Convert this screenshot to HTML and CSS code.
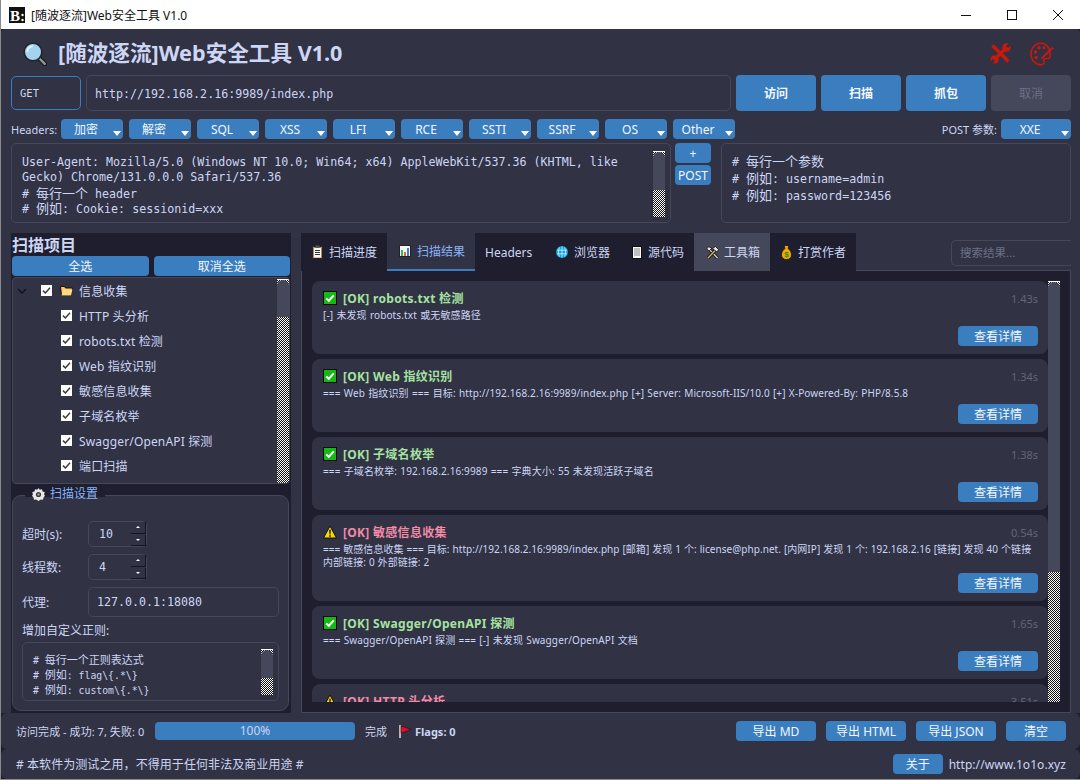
FILE: index.html
```html
<!DOCTYPE html>
<html lang="zh-CN">
<head>
  <meta charset="UTF-8" />
  <title>[随波逐流]Web安全工具 V1.0</title>
  <link rel="stylesheet" href="styles.css">
</head>
<body>
  <!-- shared icons -->
  <svg class="defs" width="0" height="0">
    <symbol id="i-tick" viewBox="0 0 11 11"><path d="M2 5.6l2.4 2.4L9 2.8" fill="none" stroke="#3a3a3a" stroke-width="1.5"/></symbol>
    <symbol id="i-ok" viewBox="0 0 14 14"><rect x=".5" y=".5" width="13" height="13" fill="#16b816" stroke="#0a0a0a"/><path d="M3.2 7.4l2.6 2.4 5-5.4" fill="none" stroke="#fff" stroke-width="2"/></symbol>
    <symbol id="i-warn" viewBox="0 0 14 14"><path d="M7 1L13.5 13H.5z" fill="#f7d900" stroke="#111" stroke-linejoin="round"/><path d="M6.2 4.8h1.6l-.3 4.6h-1zM6.2 10.2h1.6v1.6H6.2z" fill="#111"/></symbol>
  </svg>

  <div class="window">
    <header class="titlebar">
      <svg class="logo" width="16" height="16" viewBox="0 0 16 16">
        <rect width="16" height="16" fill="#111"/>
        <text x="1" y="14" font-family="Liberation Serif" font-weight="700" font-size="15" fill="#fff">B</text>
        <circle cx="13.5" cy="8" r="1.2" fill="#fff"/><circle cx="13.5" cy="13" r="1.2" fill="#fff"/>
      </svg>
      <span class="titlebar-text">[随波逐流]Web安全工具 V1.0</span>
      <div class="win-controls">
        <svg width="10" height="10" viewBox="0 0 10 10"><path d="M0 5.5h10" stroke="#111"/></svg>
        <svg width="10" height="10" viewBox="0 0 10 10"><rect x=".5" y=".5" width="9" height="9" fill="none" stroke="#111"/></svg>
        <svg width="10" height="10" viewBox="0 0 10 10"><path d="M0 0l10 10M10 0L0 10" stroke="#111"/></svg>
      </div>
    </header>

    <div class="main">
      <div class="brand-row">
        <svg class="brand-icon" width="24" height="24" viewBox="0 0 24 24">
          <path d="M15.500 15.500l6.500 6.500" stroke="#1a1a1a" stroke-width="4.600" stroke-linecap="round"/>
          <path d="M16 16l5.800 5.800" stroke="#8d969c" stroke-width="2.400" stroke-linecap="round"/>
          <circle cx="10" cy="10" r="8.800" fill="#a5d3ee" stroke="#20262b" stroke-width="1.600"/>
          <path d="M4.200 10c0-3.200 2.500-5.700 5.600-5.800" fill="none" stroke="#e6f4fc" stroke-width="1.700"/>
        </svg>
        <h1 class="brand-title">[随波逐流]Web安全工具 V1.0</h1>
        <svg class="red-tools" width="21" height="21" viewBox="0 0 21 21">
          <path d="M2.5 2.5l16 16" stroke="#c9190c" stroke-width="3.6"/>
          <path d="M4.5 16.5L16 5" stroke="#c9190c" stroke-width="3.4"/>
          <circle cx="16.5" cy="4.5" r="4.2" fill="#c9190c"/><path d="M17 4l4-4" stroke="#313244" stroke-width="2.8"/>
          <circle cx="4.5" cy="16.5" r="4" fill="#c9190c"/><path d="M4 17l-4 4" stroke="#313244" stroke-width="2.6"/>
        </svg>
        <svg class="red-palette" width="24" height="24" viewBox="0 0 24 24">
          <path d="M11 1.2C5 1.2 1 6 1 12s4.500 10.800 10 10.800c3 0 3.400-1.800 2.800-3.400-.6-1.800.4-3 2.200-3h2.200c1.400-.2 2-1.600 2-3.400C20 5.500 16 1.200 11 1.200z" fill="none" stroke="#c9190c" stroke-width="1.5"/>
          <circle cx="5.600" cy="10" r="1.700" fill="#c9190c"/><circle cx="9" cy="5.800" r="1.700" fill="#c9190c"/>
          <circle cx="14" cy="5.800" r="1.500" fill="#c9190c"/><circle cx="6.200" cy="15.500" r="1.700" fill="#c9190c"/>
          <path d="M11.500 16.500L23 5.500" stroke="#c9190c" stroke-width="2"/>
        </svg>
      </div>

      <div class="url-row">
        <div class="method">GET</div>
        <div class="field url-field mono">http://192.168.2.16:9989/index.php</div>
        <button class="btn btn-main">访问</button>
        <button class="btn btn-main">扫描</button>
        <button class="btn btn-main">抓包</button>
        <button class="btn btn-main btn-off">取消</button>
      </div>

      <div class="tool-row">
        <span class="tool-label">Headers:</span>
        <div class="drop-list">
          <button class="btn drop">加密</button>
          <button class="btn drop">解密</button>
          <button class="btn drop">SQL</button>
          <button class="btn drop">XSS</button>
          <button class="btn drop">LFI</button>
          <button class="btn drop">RCE</button>
          <button class="btn drop">SSTI</button>
          <button class="btn drop">SSRF</button>
          <button class="btn drop">OS</button>
          <button class="btn drop">Other</button>
        </div>
        <span class="tool-label post-label">POST 参数:</span>
        <button class="btn drop drop-wide">XXE</button>
      </div>

      <div class="input-row">
        <div class="field headers-box">
          <div class="mono-lines mono">
            <div class="ln">User-Agent: Mozilla/5.0 (Windows NT 10.0; Win64; x64) AppleWebKit/537.36 (KHTML, like</div>
            <div class="ln">Gecko) Chrome/131.0.0.0 Safari/537.36</div>
            <div class="ln"># <span class="zh">每行一个</span> header</div>
            <div class="ln ln-zh"># <span class="zh">例如</span>: Cookie: sessionid=xxx</div>
          </div>
          <div class="scroll scroll-headers"><div class="thumb"></div></div>
        </div>
        <div class="side-btns">
          <button class="btn side-btn">+</button>
          <button class="btn side-btn">POST</button>
        </div>
        <div class="field post-box">
          <div class="mono-lines mono">
            <div class="ln ln-zh"># <span class="zh">每行一个参数</span></div>
            <div class="ln ln-zh"># <span class="zh">例如</span>: username=admin</div>
            <div class="ln ln-zh"># <span class="zh">例如</span>: password=123456</div>
          </div>
        </div>
      </div>

      <div class="split">
        <aside class="left">
          <div class="left-title">扫描项目</div>
          <div class="left-btns">
            <button class="btn left-btn">全选</button>
            <button class="btn left-btn">取消全选</button>
          </div>
          <div class="tree">
            <div class="tree-rows">
              <div class="tree-row tree-root">
                <svg class="chevron" width="10" height="6" viewBox="0 0 10 6"><path d="M1 1l4 4 4-4" fill="none" stroke="#15151f" stroke-width="1.6"/></svg>
                <span class="check"><svg width="11" height="11"><use href="#i-tick"/></svg></span>
                <svg class="folder" width="13" height="11" viewBox="0 0 13 11"><path d="M.5 1.500h4l1 1.500h7L11 10.500H1.500z" fill="#ffc95c" stroke="#111"/><path d="M3 4.500h9.500L11 10.500H1.500z" fill="#ffd883"/></svg>
                <span>信息收集</span>
              </div>
              <div class="tree-row"><span class="check"><svg width="11" height="11"><use href="#i-tick"/></svg></span><span>HTTP 头分析</span></div>
              <div class="tree-row"><span class="check"><svg width="11" height="11"><use href="#i-tick"/></svg></span><span>robots.txt 检测</span></div>
              <div class="tree-row"><span class="check"><svg width="11" height="11"><use href="#i-tick"/></svg></span><span>Web 指纹识别</span></div>
              <div class="tree-row"><span class="check"><svg width="11" height="11"><use href="#i-tick"/></svg></span><span>敏感信息收集</span></div>
              <div class="tree-row"><span class="check"><svg width="11" height="11"><use href="#i-tick"/></svg></span><span>子域名枚举</span></div>
              <div class="tree-row"><span class="check"><svg width="11" height="11"><use href="#i-tick"/></svg></span><span>Swagger/OpenAPI 探测</span></div>
              <div class="tree-row"><span class="check"><svg width="11" height="11"><use href="#i-tick"/></svg></span><span>端口扫描</span></div>
            </div>
            <div class="scroll scroll-tree"><div class="thumb"></div></div>
          </div>

          <div class="group">
            <div class="group-title">
              <svg width="13" height="13" viewBox="0 0 13 13"><path d="M6.500 0l1.300 1.800 2.200-.6.500 2.200 2.200.6-.6 2.500.9 1.300-1.500 1.700-.5 2.200-2.200-.1-2.300 1.400-2.300-1.400-2.200.1-.5-2.200L0 7.800l.9-1.300-.6-2.500 2.200-.6.500-2.200 2.200.6z" fill="#e8e8e8"/><circle cx="6.500" cy="6.500" r="2.600" fill="#3a3a3a"/><circle cx="6.500" cy="6.500" r="1.200" fill="#9a9a9a"/></svg>
              <span>扫描设置</span>
            </div>
            <div class="form-row">
              <label class="form-label">超时(s):</label>
              <div class="spin">
                <span class="spin-value mono">10</span>
                <div class="spin-btns"><span class="spin-up"></span><span class="spin-down"></span></div>
              </div>
            </div>
            <div class="form-row">
              <label class="form-label">线程数:</label>
              <div class="spin">
                <span class="spin-value mono">4</span>
                <div class="spin-btns"><span class="spin-up"></span><span class="spin-down"></span></div>
              </div>
            </div>
            <div class="form-row">
              <label class="form-label">代理:</label>
              <div class="field proxy mono">127.0.0.1:18080</div>
            </div>
            <div class="regex-label">增加自定义正则:</div>
            <div class="field regex-box">
              <div class="regex-lines">
                <div class="regex-line"># <span class="zh-s">每行一个正则表达式</span></div>
                <div class="regex-line"># <span class="zh-s">例如</span>: flag\{.*\}</div>
                <div class="regex-line"># <span class="zh-s">例如</span>: custom\{.*\}</div>
              </div>
              <div class="scroll scroll-regex"><div class="thumb"></div></div>
            </div>
          </div>
        </aside>

        <section class="right">
          <div class="tab-row">
            <div class="tab tab-a">
              <svg width="11" height="14" viewBox="0 0 11 14"><rect x=".5" y="1.500" width="10" height="12" rx="1" fill="#b08a5e" stroke="#222"/><rect x="2" y="3" width="7" height="9.500" fill="#f5f5f5"/><rect x="3.500" y=".5" width="4" height="2.500" fill="#555"/><path d="M3 5.500h5M3 7.500h5M3 9.500h5" stroke="#333"/></svg>
              <span>扫描进度</span>
            </div>
            <div class="tab tab-b tab-active">
              <svg width="12" height="12" viewBox="0 0 12 12"><rect x=".5" y=".5" width="11" height="11" fill="#f4f4f4" stroke="#222"/><rect x="2" y="5" width="2" height="6" fill="#2fc24a"/><rect x="5" y="7" width="2" height="4" fill="#f0603c"/><rect x="8" y="3" width="2" height="8" fill="#3a7ed8"/></svg>
              <span>扫描结果</span>
            </div>
            <div class="tab tab-c"><span>Headers</span></div>
            <div class="tab tab-d">
              <svg width="12" height="12" viewBox="0 0 12 12"><circle cx="6" cy="6" r="6" fill="#0ea5e0"/><path d="M1 4.200h10M1 7.800h10M6 .5v11M3.500 1.500c-1.500 3-1.500 6 0 9M8.500 1.500c1.500 3 1.500 6 0 9" fill="none" stroke="#d8f2ff" stroke-width=".8"/></svg>
              <span>浏览器</span>
            </div>
            <div class="tab tab-e">
              <svg width="10" height="13" viewBox="0 0 10 13"><rect x=".5" y=".5" width="9" height="12" fill="#f7f7f7" stroke="#111"/><path d="M2 3h6M2 5h6M2 7h6M2 9h6" stroke="#888"/></svg>
              <span>源代码</span>
            </div>
            <div class="tab tab-f tab-hover">
              <svg width="13" height="13" viewBox="0 0 13 13"><path d="M3.500 3.500l8 8.500" stroke="#111" stroke-width="3"/><path d="M3.500 3.500l8 8.500" stroke="#d4d4d4" stroke-width="1.400"/><path d="M10 3.500l-8 8.500" stroke="#111" stroke-width="3"/><path d="M10 3.500l-8 8.500" stroke="#d9a860" stroke-width="1.500"/><path d="M6.500 2.500L9.500.5l3 3-1.500 2.500z" fill="#e5e5e5" stroke="#111" stroke-width=".8"/><path d="M.8 2.600L2.800.8l3 1.400-2.800 3z" fill="#e5e5e5" stroke="#111" stroke-width=".8"/></svg>
              <span>工具箱</span>
            </div>
            <div class="tab tab-g">
              <svg width="11" height="15" viewBox="0 0 11 15"><path d="M3 .5h5L7 3.500c2.500 1.500 3.500 4 3.500 6.500 0 3-2 4.500-5 4.500S.5 13 .5 10c0-2.500 1-5 3.500-6.500z" fill="#f5a800" stroke="#222"/><text x="5.500" y="12" font-family="Liberation Sans" font-weight="700" font-size="8" text-anchor="middle" fill="#1f8a1f">$</text></svg>
              <span>打赏作者</span>
            </div>
            <div class="search">搜索结果...</div>
          </div>

          <div class="results">
            <div class="card-list">
              <article class="card">
                <div class="card-head">
                  <svg width="14" height="14"><use href="#i-ok"/></svg>
                  <span class="card-title ok">[OK] robots.txt 检测</span>
                  <span class="card-time">1.43s</span>
                </div>
                <div class="card-body">[-] 未发现 robots.txt 或无敏感路径</div>
                <div class="card-foot"><button class="btn detail">查看详情</button></div>
              </article>
              <article class="card">
                <div class="card-head">
                  <svg width="14" height="14"><use href="#i-ok"/></svg>
                  <span class="card-title ok">[OK] Web 指纹识别</span>
                  <span class="card-time">1.34s</span>
                </div>
                <div class="card-body">=== Web 指纹识别 === 目标: http://192.168.2.16:9989/index.php [+] Server: Microsoft-IIS/10.0 [+] X-Powered-By: PHP/8.5.8</div>
                <div class="card-foot"><button class="btn detail">查看详情</button></div>
              </article>
              <article class="card">
                <div class="card-head">
                  <svg width="14" height="14"><use href="#i-ok"/></svg>
                  <span class="card-title ok">[OK] 子域名枚举</span>
                  <span class="card-time">1.38s</span>
                </div>
                <div class="card-body">=== 子域名枚举: 192.168.2.16:9989 === 字典大小: 55 未发现活跃子域名</div>
                <div class="card-foot"><button class="btn detail">查看详情</button></div>
              </article>
              <article class="card">
                <div class="card-head">
                  <svg width="14" height="14"><use href="#i-warn"/></svg>
                  <span class="card-title warn">[OK] 敏感信息收集</span>
                  <span class="card-time">0.54s</span>
                </div>
                <div class="card-body card-body-dense">=== 敏感信息收集 === 目标: http://192.168.2.16:9989/index.php [邮箱] 发现 1 个: license@php.net. [内网IP] 发现 1 个: 192.168.2.16 [链接] 发现 40 个链接<br>内部链接: 0 外部链接: 2</div>
                <div class="card-foot"><button class="btn detail">查看详情</button></div>
              </article>
              <article class="card">
                <div class="card-head">
                  <svg width="14" height="14"><use href="#i-ok"/></svg>
                  <span class="card-title ok">[OK] Swagger/OpenAPI 探测</span>
                  <span class="card-time">1.65s</span>
                </div>
                <div class="card-body">=== Swagger/OpenAPI 探测 === [-] 未发现 Swagger/OpenAPI 文档</div>
                <div class="card-foot"><button class="btn detail">查看详情</button></div>
              </article>
              <article class="card">
                <div class="card-head">
                  <svg width="14" height="14"><use href="#i-warn"/></svg>
                  <span class="card-title warn">[OK] HTTP 头分析</span>
                  <span class="card-time">3.51s</span>
                </div>
              </article>
            </div>
            <div class="scroll scroll-results"><div class="thumb"></div></div>
          </div>
        </section>
      </div>
    </div>

    <div class="status-row">
      <span class="status-text">访问完成 - 成功: 7, 失败: 0</span>
      <div class="progress">100%</div>
      <span class="done">完成</span>
      <svg class="flag" width="13" height="13" viewBox="0 0 13 13"><rect x="0" y="0" width="2" height="13" fill="#b5b5b5"/><path d="M2 1l10 3.500L2 8z" fill="#e0102c" stroke="#300" stroke-width=".5"/></svg>
      <span class="flags">Flags: 0</span>
      <div class="export-btns">
        <button class="btn export">导出 MD</button>
        <button class="btn export">导出 HTML</button>
        <button class="btn export">导出 JSON</button>
        <button class="btn export export-clear">清空</button>
      </div>
    </div>

    <div class="foot-row">
      <span class="foot-note"># 本软件为测试之用，不得用于任何非法及商业用途 #</span>
      <button class="btn about">关于</button>
      <span class="foot-link">http://www.1o1o.xyz</span>
    </div>
  </div>
</body>
</html>
```
FILE: styles.css
```css
* {
  box-sizing: border-box;
}
body {
  margin: 0;
  background-color: #1e1e2e;
  font-family: "Noto Sans", "Noto Sans CJK SC", sans-serif;
  font-size: 12px;
  color: #cdd6f4;
}
.defs {
  position: absolute;
}
svg {
  display: block;
  flex: none;
}
.window {
  width: 1080px;
  height: 780px;
  overflow: hidden;
  display: flex;
  flex-direction: column;
  border-left: 1px solid #8a8a8a;
  border-bottom: 1px solid #8a8a8a;
  background-color: #1e1e2e;
}
.mono {
  font-family: "DejaVu Sans Mono", "Noto Sans CJK SC", monospace;
  font-size: 11.65px;
}
.zh {
  font-family: "Noto Sans CJK SC", sans-serif;
  font-size: 13px;
}
.zh-s {
  font-family: "Noto Sans CJK SC", sans-serif;
  font-size: 11px;
}

/* title bar */
.titlebar {
  height: 29px;
  flex: none;
  display: flex;
  align-items: center;
  background-color: #fff;
  color: #111;
  padding-left: 8px;
}
.titlebar-text {
  margin-left: 6px;
}
.win-controls {
  margin-left: auto;
  display: flex;
  gap: 36px;
  padding-right: 17px;
}

/* top part */
.main {
  height: 684px;
  flex: none;
  padding: 0 9px 0 10px;
  background-color: #313244;
  border-radius: 4px 4px 0 0;
}
.brand-row {
  height: 46px;
  display: flex;
  align-items: center;
  padding: 0 17px 0 12px;
}
.brand-icon {
  margin-top: 4px;
}
.brand-title {
  margin: 2px 0 0 11px;
  font-size: 21.6px;
  font-weight: 700;
  line-height: 30px;
}
.red-tools {
  margin: 3px 0 0 auto;
}
.red-palette {
  margin: 3px 0 0 19px;
}
.field {
  border: 1px solid #45475a;
  border-radius: 5px;
  background-color: #313244;
}
.url-row {
  height: 36px;
  display: flex;
  align-items: center;
  gap: 5px;
}
.method {
  width: 70px;
  height: 34px;
  border: 1px solid #3a7ebf;
  border-radius: 5px;
  padding-left: 8px;
  line-height: 33px;
  font-family: "DejaVu Sans Mono", monospace;
  font-size: 10.5px;
}
.url-field {
  flex: 1;
  height: 36px;
  padding-left: 8px;
  line-height: 36px;
}
.btn {
  border: none;
  border-radius: 4px;
  background-color: #3a7ebf;
  color: #f4f7fd;
  font-family: inherit;
  font-size: 12px;
  padding: 0;
  cursor: pointer;
}
.btn-main {
  width: 80px;
  height: 36px;
  font-weight: 700;
}
.btn-off {
  background-color: #45475a;
  color: #6c7086;
  font-weight: 400;
}
.tool-row {
  height: 20px;
  margin-top: 8px;
  display: flex;
  align-items: center;
}
.tool-label {
  width: 50px;
  font-size: 11px;
}
.post-label {
  width: auto;
  margin-left: auto;
  margin-right: 4px;
}
.drop-list {
  display: flex;
  gap: 6px;
}
.drop {
  position: relative;
  width: 62px;
  height: 20px;
  padding-right: 12px;
}
.drop::after {
  content: "";
  position: absolute;
  right: 2px;
  bottom: 3px;
  border-left: 4.5px solid transparent;
  border-right: 4.5px solid transparent;
  border-top: 5px solid #fff;
}
.drop-wide {
  width: 70px;
}
.input-row {
  height: 80px;
  margin-top: 4px;
  display: flex;
}
.headers-box {
  width: 660px;
  display: flex;
  padding: 11px 5px 0 10px;
}
.mono-lines {
  flex: 1;
}
.ln {
  height: 15px;
  line-height: 15px;
  white-space: nowrap;
}
.ln-zh {
  height: 17px;
  line-height: 15px;
}
.side-btns {
  margin-left: 4px;
  display: flex;
  flex-direction: column;
  gap: 2px;
}
.side-btn {
  width: 36px;
  height: 20px;
}
.post-box {
  flex: 1;
  margin-left: 10px;
  padding: 9px 10px 0;
}

/* scrollbars are drawn, the lists do not really scroll */
.scroll {
  width: 12px;
  flex: none;
  border-top: 1px dotted #fff;
  background-image: repeating-conic-gradient(#fff 0 25%, #111 0 50%);
  background-size: 2px 2px;
}
.thumb {
  background-color: #45475a;
  border-radius: 6px 6px 0 0;
}
.scroll-headers {
  height: 66px;
  margin-top: -4px;
}
.scroll-headers .thumb {
  height: 38px;
}
.scroll-tree {
  height: 204px;
  margin: 1px 0 0 auto;
}
.scroll-tree .thumb {
  height: 37px;
}
.scroll-regex {
  height: 46px;
  margin: -3px 0 0 auto;
}
.scroll-regex .thumb {
  height: 28px;
}
.scroll-results .thumb {
  height: 290px;
}

/* split */
.split {
  height: 480px;
  margin-top: 10px;
  display: flex;
  gap: 10px;
}
.left {
  width: 280px;
  flex: none;
  background-color: #1e1e2e;
  padding-left: 1px;
}
.left-title {
  height: 23px;
  font-size: 16px;
  font-weight: 700;
  line-height: 24px;
}
.left-btns {
  display: flex;
  gap: 5px;
  width: 278px;
}
.left-btn {
  flex: 1;
  height: 20px;
}
.tree {
  width: 278px;
  height: 207px;
  margin-top: 1px;
  display: flex;
  overflow: hidden;
  border: 1px solid #45475a;
  border-radius: 4px;
  background-color: #313244;
}
.tree-row {
  height: 25px;
  display: flex;
  align-items: center;
  padding-left: 48px;
  gap: 7px;
  white-space: nowrap;
  letter-spacing: .15px;
}
.tree-root {
  padding-left: 4px;
  gap: 0;
}
.chevron {
  margin-right: 14px;
}
.check {
  width: 11px;
  height: 11px;
  background-color: #fff;
}
.folder {
  margin: 0 6px 0 8px;
}
.group {
  position: relative;
  width: 277px;
  height: 216px;
  margin-top: 11px;
  border: 1px solid #45475a;
  border-radius: 9px;
  background-color: #313244;
  padding: 25px 9px 0;
}
.group-title {
  position: absolute;
  left: 12px;
  top: -11px;
  height: 12px;
  padding: 0 7px;
  display: flex;
  gap: 5px;
  line-height: 18px;
  background-color: #1e1e2e;
  color: #89b4fa;
}
.group-title svg {
  margin-top: 3px;
}
.form-row {
  display: flex;
  align-items: center;
  margin-bottom: 7px;
}
.form-label {
  width: 66px;
}
.spin {
  width: 59px;
  height: 26px;
  display: flex;
  align-items: center;
  justify-content: space-between;
  border: 1px solid #45475a;
  border-radius: 5px;
  padding-left: 10px;
}
.spin-btns {
  width: 15px;
  height: 24px;
  display: flex;
  flex-direction: column;
  gap: 1px;
}
.spin-up,
.spin-down {
  flex: 1;
  display: flex;
  align-items: center;
  justify-content: center;
  background-color: #313244;
  border-right: 1px solid #15151f;
  border-bottom: 1px solid #15151f;
}
.spin-up::before,
.spin-down::before {
  content: "";
  border-left: 2px solid transparent;
  border-right: 2px solid transparent;
}
.spin-up::before {
  border-bottom: 2px solid #fff;
}
.spin-down::before {
  border-top: 2px solid #fff;
}
.proxy {
  width: 191px;
  height: 30px;
  padding-left: 8px;
  line-height: 28px;
}
.regex-label {
  height: 25px;
  margin-top: -7px;
  line-height: 28px;
}
.regex-box {
  width: 257px;
  height: 59px;
  display: flex;
  padding: 9px 5px 0 10px;
}
.regex-lines {
  font-family: "DejaVu Sans Mono", "Noto Sans CJK SC", monospace;
  font-size: 9.8px;
  white-space: nowrap;
}
.regex-line {
  height: 15px;
  line-height: 15px;
}

/* results side */
.right {
  flex: 1;
  display: flex;
  flex-direction: column;
  min-width: 0;
}
.tab-row {
  height: 38px;
  flex: none;
  display: flex;
  border-bottom: 1px solid #45475a;
}
.tab {
  height: 38px;
  display: flex;
  align-items: center;
  padding-left: 12px;
  background-color: #1e1e2e;
  white-space: nowrap;
  position: relative;
}
.tab-a { width: 86px; gap: 6px; padding-left: 11px; }
.tab-b { width: 88px; gap: 6px; }
.tab-c { width: 71px; padding-left: 10px; }
.tab-d { width: 76px; padding-left: 10px; gap: 6px; }
.tab-e { width: 72px; padding-left: 10px; gap: 6px; }
.tab-f { width: 76px; gap: 5px; }
.tab-g { width: 86px; padding-left: 11px; gap: 6px; }
.tab-active {
  background-color: #313244;
  border-bottom: 2px solid #3a7ebf;
  color: #89b4fa;
}
.tab-hover {
  background-color: #45475a;
}
.search {
  width: 120px;
  height: 26px;
  margin: 7px 0 0 auto;
  border: 1px solid #45475a;
  border-right: none;
  border-radius: 5px 0 0 5px;
  padding-left: 8px;
  line-height: 24px;
  font-size: 11.5px;
  color: #6c7086;
}
.results {
  flex: 1;
  display: flex;
  min-height: 0;
  padding: 10px;
  background-color: #1e1e2e;
  border: 1px solid #45475a;
  border-top: none;
}
.card-list {
  flex: 1;
  min-width: 0;
  overflow: hidden;
  display: flex;
  flex-direction: column;
  gap: 5px;
}
.card {
  flex: none;
  padding: 7px 10px 8px 11px;
  background-color: #313244;
  border-radius: 8px;
}
.card-head {
  height: 20px;
  display: flex;
  align-items: center;
}
.card-title {
  margin-left: 6px;
  font-weight: 700;
  letter-spacing: .3px;
}
.ok {
  color: #a6e3a1;
}
.warn {
  color: #f38ba8;
}
.card-time {
  margin-left: auto;
  font-size: 11px;
  color: #626578;
}
.card-body {
  padding-top: 1px;
  font-size: 10px;
  line-height: 13px;
  letter-spacing: .12px;
  word-spacing: .5px;
  white-space: nowrap;
}
.card-body-dense {
  letter-spacing: .05px;
  word-spacing: .3px;
}
.card-foot {
  margin-top: 4px;
  display: flex;
  justify-content: flex-end;
}
.detail {
  width: 80px;
  height: 20px;
}

/* bottom rows */
.status-row {
  height: 36px;
  flex: none;
  display: flex;
  align-items: center;
  padding: 0 14px 0 15px;
  background-color: #313244;
  border-radius: 6px;
  font-size: 11px;
}
.status-text {
  width: 139px;
  white-space: nowrap;
  letter-spacing: .05px;
}
.progress {
  width: 200px;
  height: 18px;
  border-radius: 4px;
  background-color: #3a7ebf;
  text-align: center;
  line-height: 18px;
  font-size: 12px;
}
.done {
  margin-left: 10px;
}
.flag {
  margin-left: 12px;
}
.flags {
  margin-left: 3px;
  font-weight: 700;
}
.export-btns {
  margin-left: auto;
  display: flex;
  gap: 10px;
}
.export {
  width: 80px;
  height: 20px;
}
.export-clear {
  width: 60px;
}
.foot-row {
  flex: 1;
  display: flex;
  align-items: center;
  padding: 0 14px 0 15px;
  background-color: #313244;
  border-radius: 6px;
}
.foot-note {
  white-space: nowrap;
  letter-spacing: .07px;
}
.about {
  width: 50px;
  height: 20px;
  margin-left: auto;
}
.foot-link {
  margin-left: 6px;
  letter-spacing: .06px;
}
```
